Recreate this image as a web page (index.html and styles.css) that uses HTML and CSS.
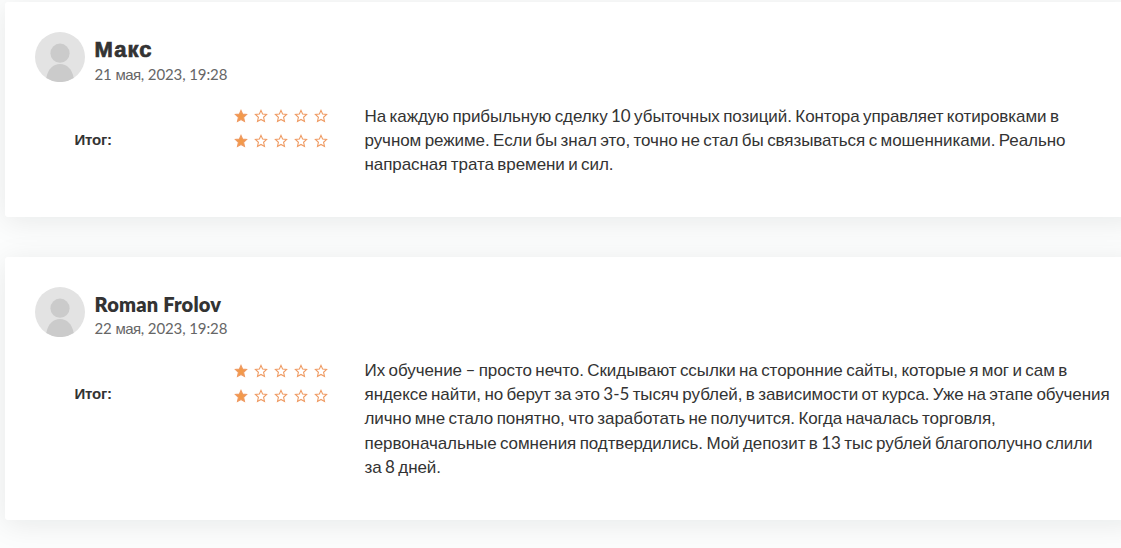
FILE: index.html
```html
<!DOCTYPE html>
<html lang="ru">
<head>
<meta charset="utf-8">
<title>Отзывы</title>
<link rel="stylesheet" href="styles.css">
</head>
<body>
<svg class="sprite" width="0" height="0" aria-hidden="true">
  <symbol id="star" viewBox="0 0 14 14"><path d="M7 1.400 8.600 5l4 .5-3 2.800.9 4.100L7 10.400l-3.500 2 .9-4.100-3-2.800 4-.5z"/></symbol>
  <symbol id="avatar" viewBox="0 0 50 50"><circle cx="25" cy="25" r="25" fill="#e3e3e3"/><circle cx="25" cy="21.2" r="9.6" fill="#cbcbcb"/><path d="M11.300 46C13 37 18 32 25 32s12 5 13.700 14A25 25 0 0 1 11.300 46z" fill="#cbcbcb"/></symbol>
</svg>
<main class="reviews">
  <article class="card first">
    <header class="author">
      <svg class="avatar"><use href="#avatar"/></svg>
      <div><h3 class="name wide">Макс</h3><p class="date">21 <span class="cyr">мая</span>, 2023, 19:28</p></div>
    </header>
    <div class="content">
      <div class="label">Итог:</div>
      <div class="ratings">
        <div class="stars"><svg class="on"><use href="#star"/></svg><svg><use href="#star"/></svg><svg><use href="#star"/></svg><svg><use href="#star"/></svg><svg><use href="#star"/></svg></div>
        <div class="stars"><svg class="on"><use href="#star"/></svg><svg><use href="#star"/></svg><svg><use href="#star"/></svg><svg><use href="#star"/></svg><svg><use href="#star"/></svg></div>
      </div>
      <p class="text">На каждую прибыльную сделку <span class="num">10</span> убыточных позиций. Контора управляет котировками в<br>ручном режиме. Если бы знал это, точно не стал бы связываться с мошенниками. Реально<br>напрасная трата времени и сил.</p>
    </div>
  </article>
  <article class="card second">
    <header class="author">
      <svg class="avatar"><use href="#avatar"/></svg>
      <div><h3 class="name">Roman Frolov</h3><p class="date">22 <span class="cyr">мая</span>, 2023, 19:28</p></div>
    </header>
    <div class="content">
      <div class="label">Итог:</div>
      <div class="ratings">
        <div class="stars"><svg class="on"><use href="#star"/></svg><svg><use href="#star"/></svg><svg><use href="#star"/></svg><svg><use href="#star"/></svg><svg><use href="#star"/></svg></div>
        <div class="stars"><svg class="on"><use href="#star"/></svg><svg><use href="#star"/></svg><svg><use href="#star"/></svg><svg><use href="#star"/></svg><svg><use href="#star"/></svg></div>
      </div>
      <p class="text">Их обучение <span class="num">–</span> просто нечто. Скидывают ссылки на сторонние сайты, которые я мог и сам в<br>яндексе найти, но берут за это <span class="num">3-5</span> тысяч рублей, в зависимости от курса. Уже на этапе обучения<br>лично мне стало понятно, что заработать не получится. Когда началась торговля,<br>первоначальные сомнения подтвердились. Мой депозит в <span class="num">13</span> тыс рублей благополучно слили<br>за <span class="num">8</span> дней.</p>
    </div>
  </article>
</main>
</body>
</html>
```
FILE: styles.css
```css
* { box-sizing: border-box; }
body { margin: 0; height: 548px; overflow: hidden; background: #fcfdfd; color: #333; font-family: "Liberation Sans", Arial, sans-serif; }
.sprite { position: absolute; }
.reviews { display: flex; flex-direction: column; gap: 40px; padding: 2px 0 0 5px; width: 1139px; }
.card { flex: none; padding: 30px; background: #fff; border-radius: 3px; box-shadow: 0 4px 30px rgba(0, 20, 25, .085); }
.first { height: 215px; }
.second { height: 263px; }
.author { display: flex; gap: 9.500px; height: 50px; }
.avatar { width: 50px; height: 50px; }
.name { margin: 5px 0 0; font: 800 20px/26px Lato, sans-serif; letter-spacing: .2px; }
.wide { font-family: "Liberation Sans", Arial, sans-serif; font-size: 22px; font-weight: 700; letter-spacing: 1.100px; -webkit-text-stroke: .7px #333; }
.date { margin: 0; font: 15px/22px Lato, sans-serif; color: #666; letter-spacing: -.1px; }
.cyr { font-family: "Liberation Sans", Arial, sans-serif; letter-spacing: -.5px; }
.content { display: flex; padding: 22px 0 0 39.500px; }
.second .name { margin-top: 4px; }
.second .content { padding-top: 21px; }
.second .ratings { padding-top: 6px; }
.label { flex: none; width: 159.500px; padding-top: 25px; font-size: 15px; font-weight: 700; line-height: 22px; letter-spacing: -.2px; }
.ratings { flex: none; width: 130.500px; padding-top: 5px; }
.stars { display: flex; gap: 6px; height: 25px; }
.stars svg { width: 14px; height: 14px; fill: none; stroke: #ef9a62; stroke-width: 1.100; }
.stars .on { fill: #f2994a; }
.text { flex: none; margin: 0; padding-top: .8px; font-size: 17px; line-height: 24.300px; white-space: nowrap; letter-spacing: -.07px; word-spacing: -1.200px; }
.num { font-family: Lato, sans-serif; font-size: 17px; line-height: 1; }
```
